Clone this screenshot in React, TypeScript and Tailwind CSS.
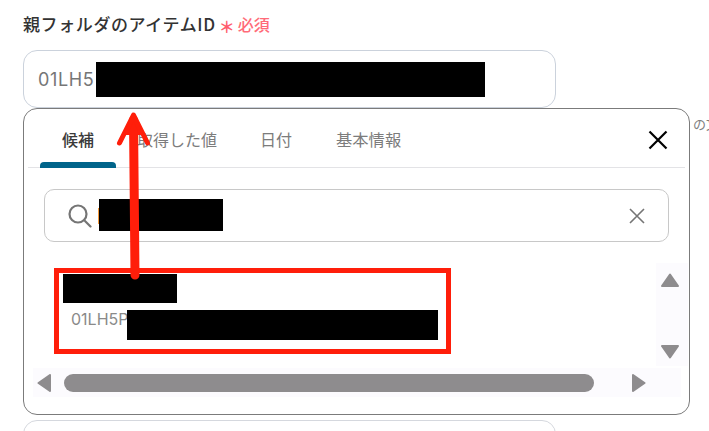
export default function App() {
  return (
    <div className="relative w-[709px] h-[431px] overflow-hidden bg-white text-[#333] font-['Noto_Sans_CJK_JP','Noto_Sans',sans-serif]">
      {/* form flow */}
      <div className="pl-[23px] pt-[12px]">
        <div className="flex items-center h-[24px]">
          <span className="text-[17px] font-medium leading-[24px] text-[#333] tracking-[0.6px]">親フォルダのアイテムID</span>
          <span className="ml-[3px] text-[16px] font-bold leading-[24px] text-[#ff5c6c] mt-[3px]">＊</span>
          <span className="ml-[3px] text-[16px] leading-[24px] font-medium text-[#ff6b78]">必須</span>
        </div>
        <div className="mt-[14px] w-[533px] h-[58px] rounded-[14px] border border-[#cbd2dc] flex items-center pl-[14px] text-[18px] text-[#767676] tracking-[0.6px] font-['Inter','Noto_Sans',sans-serif]">
          01LH5
        </div>
        <div className="mt-[6px] h-[20px] pl-[670px] whitespace-nowrap text-[13px] leading-[20px] text-[#808080]">の文字</div>
        <div className="mt-[286px] w-[533px] h-[58px] rounded-[14px] border border-[#d5d8de]" />
      </div>

      {/* suggestion popup */}
      <div className="absolute left-[23px] top-[108px] w-[667px] h-[307px] rounded-[14px] border border-[#7b7b7b] bg-white flex flex-col">
        <div className="relative mx-[4px] h-[59px] border-b border-[#e3e3e6] flex pl-[12px] items-end shrink-0">
          <div className="relative w-[76px] h-[58px] pt-[2px] flex items-center justify-center text-[16px] font-medium text-[#3a3a3a]">
            候補
            <div className="absolute left-0 right-0 bottom-[-1px] h-[6px] rounded-t-[4px] bg-[#00648a]" />
          </div>
          <div className="h-[58px] pt-[2px] flex items-center ml-[21px] text-[16px] text-[#7c7c7c]">取得した値</div>
          <div className="h-[58px] pt-[2px] flex items-center ml-[43px] text-[16px] text-[#7c7c7c]">日付</div>
          <div className="h-[58px] pt-[2px] flex items-center ml-[44px] text-[16.3px] text-[#7c7c7c]">基本情報</div>
          <svg className="absolute right-[17px] top-[21px]" width="20" height="20" viewBox="0 0 20 20" fill="none" stroke="#000" strokeWidth="2.2">
            <path d="M1.500 1.500 L18.500 18.500 M18.500 1.500 L1.500 18.500" />
          </svg>
        </div>

        <div className="mx-[20px] mt-[21px] h-[53px] shrink-0 rounded-[10px] border border-[#c8c8c8] flex items-center justify-between pl-[23px] pr-[23px]">
          <svg width="24" height="24" viewBox="0 0 24 24" fill="none" stroke="#757575" strokeWidth="2.2" strokeLinecap="round">
            <circle cx="10" cy="10" r="8.5" />
            <path d="M16.5 16.5 L22.5 22.5" />
          </svg>
          <svg width="16" height="16" viewBox="0 0 16 16" fill="none" stroke="#757575" strokeWidth="1.6">
            <path d="M1 1 L15 15 M15 1 L1 15" />
          </svg>
        </div>

        {/* result list + vertical scrollbar */}
        <div className="mt-[21px] flex">
          <div className="flex-1 pl-[47px] pt-[45px] text-[16px] leading-[22px] text-[#8a8a8a] font-['Inter','Noto_Sans',sans-serif]">01LH5P</div>
          <div className="mr-[1px] w-[32px] h-[103px] bg-[#fcfbfe] flex flex-col items-center justify-between pt-[10px] pb-[7px] pr-[4px]">
            <svg width="18" height="14" viewBox="0 0 18 14" fill="#8e8c8e" stroke="#8e8c8e" strokeWidth="2" strokeLinejoin="round"><path d="M9 1.500 L17 13 L1 13 Z" /></svg>
            <svg width="18" height="14" viewBox="0 0 18 14" fill="#8e8c8e" stroke="#8e8c8e" strokeWidth="2" strokeLinejoin="round"><path d="M1 1 L17 1 L9 12.500 Z" /></svg>
          </div>
        </div>

        {/* horizontal scrollbar */}
        <div className="ml-[9px] mt-[2px] w-[648px] h-[29px] bg-[#fcfbfe] flex items-center">
          <svg className="ml-[4px] shrink-0" width="14" height="18" viewBox="0 0 14 18" fill="#8e8c8e" stroke="#8e8c8e" strokeWidth="2" strokeLinejoin="round"><path d="M1.500 9 L13 1 L13 17 Z" /></svg>
          <div className="ml-[13px] w-[530px] h-[18px] rounded-full bg-[#8e8c8e] shrink-0" />
          <svg className="ml-[38px] shrink-0" width="14" height="18" viewBox="0 0 14 18" fill="#8e8c8e" stroke="#8e8c8e" strokeWidth="2" strokeLinejoin="round"><path d="M1 1 L12.500 9 L1 17 Z" /></svg>
        </div>
      </div>

      {/* redactions and annotations over the screenshot */}
      <div className="absolute left-[96px] top-[62px] w-[389px] h-[35px] bg-black" />
      <div className="absolute left-[98px] top-[208px] w-[2px] h-[16px] bg-[#f59a3c]" />
      <div className="absolute left-[99px] top-[199px] w-[124px] h-[32px] bg-black" />
      <div className="absolute left-[54px] top-[268px] w-[397px] h-[86px] border-[5px] border-[#ff1e0a]" />
      <div className="absolute left-[63px] top-[274px] w-[114px] h-[29px] bg-black" />
      <div className="absolute left-[127px] top-[310px] w-[311px] h-[30px] bg-black" />
      <svg className="absolute left-[110px] top-[105px]" width="50" height="175" viewBox="0 0 50 175" fill="none" stroke="#ff1e0a" strokeLinecap="round" strokeLinejoin="round">
        <path d="M25 170 L23.500 15" strokeWidth="9" />
        <path d="M9.500 38 L23.500 10 L37.500 38" strokeWidth="5" />
        <path d="M23.500 12 L16 28 L31 28 Z" fill="#ff1e0a" strokeWidth="4" />
      </svg>
    </div>
  );
}
